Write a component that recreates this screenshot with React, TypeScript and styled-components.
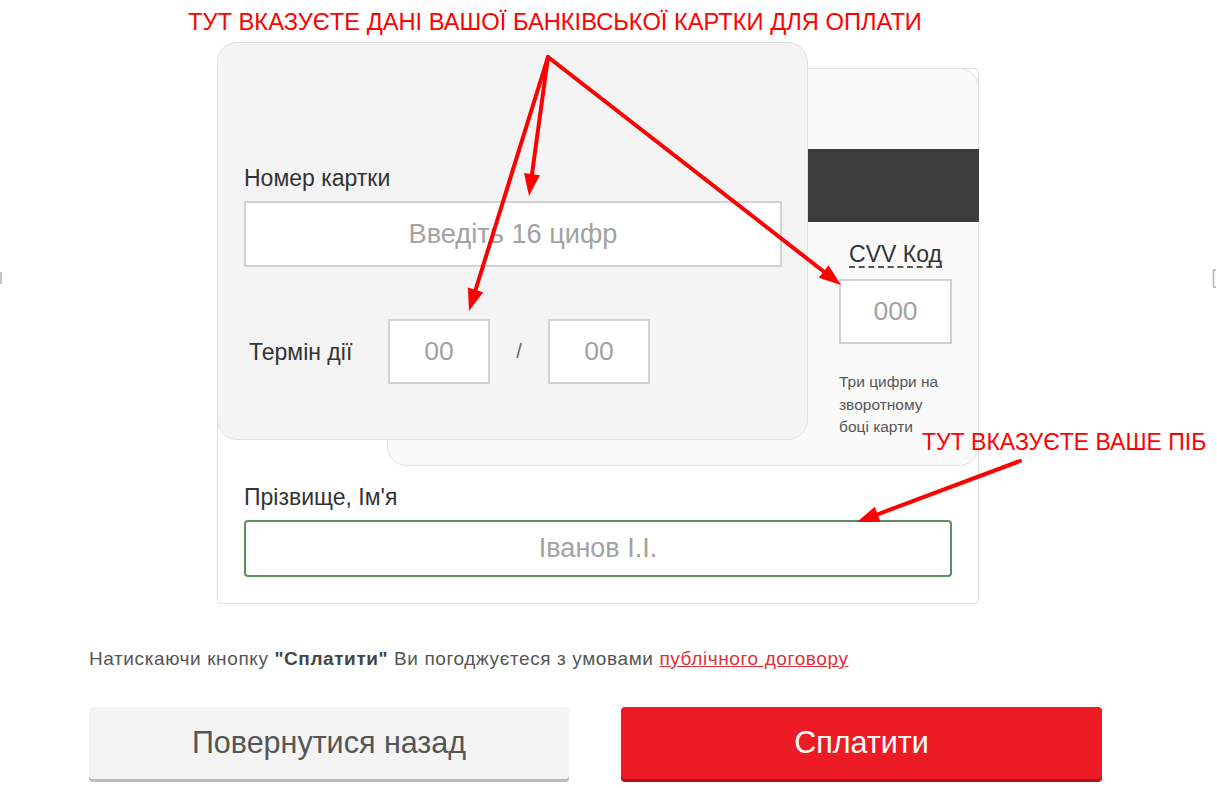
import styled, { createGlobalStyle } from 'styled-components';

const GlobalStyle = createGlobalStyle`
  html, body {
    margin: 0;
    padding: 0;
    background: #fff;
  }
  * {
    box-sizing: border-box;
  }
`;

const FONT = `"Liberation Sans", Arial, sans-serif`;

const Page = styled.div`
    position: relative;
    width: 1217px;
    height: 788px;
    overflow: hidden;
    padding-left: 89px;
    font-family: ${FONT};
    color: #333;
`;

const TopNote = styled.div`
    height: 42px;
    padding: 8px 0 0 99px;
    font-size: 23.7px;
    line-height: 28px;
    color: #ff0000;
    white-space: nowrap;
`;

const Form = styled.div`
    margin-left: 128px;
    width: 762px;
`;

const Panel = styled.div`
    margin-top: 26px;
    border: 1px solid #dedede;
    border-radius: 4px;
    padding: 0 26px 26px;
    background: #fff;
`;

const Stage = styled.div`
    display: grid;
    grid-template-columns: 1fr;
    margin: -27px -27px 0;
`;

const FrontCard = styled.div`
    grid-area: 1 / 1;
    justify-self: start;
    z-index: 2;
    width: 591px;
    height: 398px;
    padding: 122px 25px 0 26px;
    border: 1px solid #e0e0e0;
    border-radius: 20px;
    background: #f4f4f4;
`;

const BackCard = styled.div`
    grid-area: 1 / 1;
    justify-self: end;
    z-index: 1;
    width: 592px;
    height: 398px;
    margin-top: 26px;
    border: 1px solid #e0e0e0;
    border-radius: 20px;
    background: #fafafa;
    display: flex;
    flex-direction: column;
`;

const Stripe = styled.div`
    margin: 80px -1px 0 0;
    height: 73px;
    background: #3c3c3c;
`;

const Label = styled.div`
    font-size: 23px;
    line-height: 27.6px;
    color: #333;
`;

const Field = styled.input<{ $w?: number; $h: number; $green?: boolean }>`
    display: block;
    width: ${(p) => (p.$w ? `${p.$w}px` : '100%')};
    height: ${(p) => p.$h}px;
    border: 2px solid ${(p) => (p.$green ? '#5e8f5e' : '#d2d2d2')};
    border-radius: ${(p) => (p.$green ? '4px' : '0')};
    background: #fff;
    font-family: ${FONT};
    font-size: 26.5px;
    text-align: center;
    color: #333;
    outline: none;
    padding: 0;

    &::placeholder {
        color: #a2a2a2;
        opacity: 1;
    }
`;

const NumberField = styled(Field)`
    margin-top: 8px;
    font-size: 27.2px;
`;

const ExpiryRow = styled.div`
    display: flex;
    align-items: center;
    margin-top: 52px;
`;

const ExpiryLabel = styled(Label)`
    margin-left: 5px;
    width: 139px;
    padding-top: 3px;
`;

const Slash = styled.div`
    width: 58px;
    text-align: center;
    font-size: 20px;
    color: #666;
`;

const CvvBlock = styled.div`
    align-self: flex-end;
    width: 113px;
    margin: 20px 26px 0 0;
`;

const CvvLabel = styled.div`
    text-align: center;
    font-size: 23px;
    line-height: 24px;

    span {
        display: inline-block;
        border-bottom: 2px dashed #555;
    }
`;

const CvvField = styled(Field)`
    margin-top: 11px;
`;

const CvvHint = styled.div`
    margin-top: 27px;
    font-size: 15.5px;
    line-height: 22.5px;
    color: #555;
    white-space: nowrap;
`;

const NameSection = styled.div`
    margin-top: 18px;
`;

const NameField = styled(Field)`
    margin-top: 8px;
    font-size: 27px;
`;

const Agreement = styled.div`
    margin-top: 43px;
    font-size: 19px;
    letter-spacing: 0.6px;
    line-height: 24px;
    color: #555;
    white-space: nowrap;

    b {
        color: #444;
    }

    a {
        color: #e0303a;
        text-decoration: underline;
    }
`;

const Buttons = styled.div`
    display: flex;
    gap: 52px;
    margin-top: 36px;
`;

const Button = styled.button<{ $primary?: boolean }>`
    width: ${(p) => (p.$primary ? 481 : 480)}px;
    height: 72px;
    border: none;
    border-radius: 4px;
    font-family: ${FONT};
    font-size: 30.5px;
    cursor: pointer;
    background: ${(p) => (p.$primary ? '#ed1c24' : '#f4f4f4')};
    color: ${(p) => (p.$primary ? '#fff' : '#555')};
    box-shadow: 0 3px 0 ${(p) => (p.$primary ? '#b3111a' : '#bdbdbd')};
`;

const Overlay = styled.svg`
    position: absolute;
    top: 0;
    left: 0;
    pointer-events: none;
    z-index: 10;
`;

const SideNote = styled.div`
    position: absolute;
    left: 922px;
    top: 428px;
    font-size: 23px;
    line-height: 28px;
    color: #ff0000;
    white-space: nowrap;
    z-index: 10;
`;

type Arrow = { x1: number; y1: number; x2: number; y2: number };

const arrows: Arrow[] = [
    { x1: 548, y1: 57, x2: 529, y2: 196 },
    { x1: 548, y1: 57, x2: 469, y2: 311 },
    { x1: 548, y1: 57, x2: 841, y2: 285 },
    { x1: 1020, y1: 461, x2: 857, y2: 522 },
];

// arrow head triangle + the base point the shaft stops at
const head = ({ x1, y1, x2, y2 }: Arrow, len = 22, w = 8) => {
    const d = Math.hypot(x2 - x1, y2 - y1);
    const ux = (x2 - x1) / d;
    const uy = (y2 - y1) / d;
    const bx = x2 - ux * len;
    const by = y2 - uy * len;
    return {
        bx,
        by,
        pts: `${x2},${y2} ${bx - uy * w},${by + ux * w} ${bx + uy * w},${by - ux * w}`,
    };
};

const Annotations = () => (
    <Overlay width={1217} height={788} viewBox="0 0 1217 788">
        {arrows.map((a, i) => {
            const h = head(a);
            return (
                <g key={i}>
                    <line x1={a.x1} y1={a.y1} x2={h.bx} y2={h.by} stroke="#ff0000" strokeWidth={4} strokeLinecap="round" />
                    <polygon points={h.pts} fill="#ff0000" />
                </g>
            );
        })}
        <rect x={0} y={272} width={2} height={12} fill="#c4c4c4" />
        <path d="M1216 270 H1213.5 V287 H1216" stroke="#b4b4b4" strokeWidth={1.5} fill="none" />
    </Overlay>
);

const App = () => {
    return (
        <>
            <GlobalStyle />
            <Page>
                <TopNote>ТУТ ВКАЗУЄТЕ ДАНІ ВАШОЇ БАНКІВСЬКОЇ КАРТКИ ДЛЯ ОПЛАТИ</TopNote>
                <Form>
                    <Panel>
                        <Stage>
                            <FrontCard>
                                <Label>Номер картки</Label>
                                <NumberField $h={66} placeholder="Введіть 16 цифр" />
                                <ExpiryRow>
                                    <ExpiryLabel>Термін дії</ExpiryLabel>
                                    <Field $w={102} $h={65} placeholder="00" />
                                    <Slash>/</Slash>
                                    <Field $w={102} $h={65} placeholder="00" />
                                </ExpiryRow>
                            </FrontCard>
                            <BackCard>
                                <Stripe />
                                <CvvBlock>
                                    <CvvLabel>
                                        <span>CVV Код</span>
                                    </CvvLabel>
                                    <CvvField $w={113} $h={65} placeholder="000" />
                                    <CvvHint>
                                        Три цифри на
                                        <br />
                                        зворотному
                                        <br />
                                        боці карти
                                    </CvvHint>
                                </CvvBlock>
                            </BackCard>
                        </Stage>
                        <NameSection>
                            <Label>Прізвище, Ім'я</Label>
                            <NameField $h={57} $green placeholder="Іванов І.І." />
                        </NameSection>
                    </Panel>
                </Form>
                <Agreement>
                    Натискаючи кнопку <b>"Сплатити"</b> Ви погоджуєтеся з умовами <a href="#">публічного договору</a>
                </Agreement>
                <Buttons>
                    <Button>Повернутися назад</Button>
                    <Button $primary>Сплатити</Button>
                </Buttons>
                <SideNote>ТУТ ВКАЗУЄТЕ ВАШЕ ПІБ</SideNote>
                <Annotations />
            </Page>
        </>
    );
};

export default App;
